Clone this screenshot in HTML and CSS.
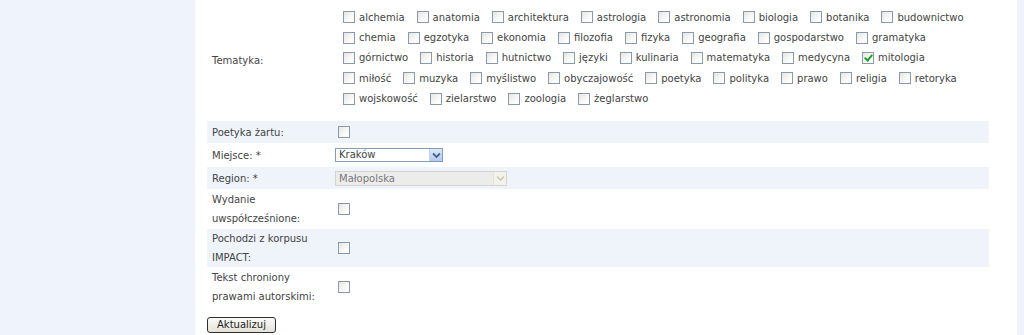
FILE: index.html
```html
<!DOCTYPE html>
<html lang="pl">

<head>
    <meta charset="UTF-8">
    <title>Edycja tekstu</title>
    <link rel="stylesheet" href="styles.css">
</head>

<body>
    <div class="page">
        <div class="sidebar"></div>
        <div class="content">
            <form class="edit-form">
                <table class="fields">
                    <tr class="row-topics">
                        <td class="label">Tematyka:</td>
                        <td class="value">
                            <div class="topics">
                                <label class="topic"><input type="checkbox">alchemia</label>
                                <label class="topic"><input type="checkbox">anatomia</label>
                                <label class="topic"><input type="checkbox">architektura</label>
                                <label class="topic"><input type="checkbox">astrologia</label>
                                <label class="topic"><input type="checkbox">astronomia</label>
                                <label class="topic"><input type="checkbox">biologia</label>
                                <label class="topic"><input type="checkbox">botanika</label>
                                <label class="topic"><input type="checkbox">budownictwo</label>
                                <label class="topic"><input type="checkbox">chemia</label>
                                <label class="topic"><input type="checkbox">egzotyka</label>
                                <label class="topic"><input type="checkbox">ekonomia</label>
                                <label class="topic"><input type="checkbox">filozofia</label>
                                <label class="topic"><input type="checkbox">fizyka</label>
                                <label class="topic"><input type="checkbox">geografia</label>
                                <label class="topic"><input type="checkbox">gospodarstwo</label>
                                <label class="topic"><input type="checkbox">gramatyka</label>
                                <label class="topic"><input type="checkbox">górnictwo</label>
                                <label class="topic"><input type="checkbox">historia</label>
                                <label class="topic"><input type="checkbox">hutnictwo</label>
                                <label class="topic"><input type="checkbox">języki</label>
                                <label class="topic"><input type="checkbox">kulinaria</label>
                                <label class="topic"><input type="checkbox">matematyka</label>
                                <label class="topic"><input type="checkbox">medycyna</label>
                                <label class="topic"><input type="checkbox" checked>mitologia</label>
                                <label class="topic"><input type="checkbox">miłość</label>
                                <label class="topic"><input type="checkbox">muzyka</label>
                                <label class="topic"><input type="checkbox">myślistwo</label>
                                <label class="topic"><input type="checkbox">obyczajowość</label>
                                <label class="topic"><input type="checkbox">poetyka</label>
                                <label class="topic"><input type="checkbox">polityka</label>
                                <label class="topic"><input type="checkbox">prawo</label>
                                <label class="topic"><input type="checkbox">religia</label>
                                <label class="topic"><input type="checkbox">retoryka</label>
                                <label class="topic"><input type="checkbox">wojskowość</label>
                                <label class="topic"><input type="checkbox">zielarstwo</label>
                                <label class="topic"><input type="checkbox">zoologia</label>
                                <label class="topic"><input type="checkbox">żeglarstwo</label>
                            </div>
                        </td>
                    </tr>
                    <tr class="odd row-short">
                        <td class="label">Poetyka żartu:</td>
                        <td class="value"><input type="checkbox" class="single"></td>
                    </tr>
                    <tr class="row-short">
                        <td class="label">Miejsce: *</td>
                        <td class="value">
                            <span class="select-box place">
                                <select>
                                    <option>Kraków</option>
                                </select>
                                <span class="select-arrow"><svg width="9" height="7" viewBox="0 0 9 7"><path d="M1 1.5 L4.5 5 L8 1.5" fill="none" stroke="#4d6185" stroke-width="1.8"/></svg></span>
                            </span>
                        </td>
                    </tr>
                    <tr class="odd row-short">
                        <td class="label">Region: *</td>
                        <td class="value">
                            <span class="select-box region disabled">
                                <select disabled>
                                    <option>Małopolska</option>
                                </select>
                                <span class="select-arrow"><svg width="9" height="7" viewBox="0 0 9 7"><path d="M1 1.5 L4.5 5 L8 1.5" fill="none" stroke="#c9c7ba" stroke-width="1.5"/></svg></span>
                            </span>
                        </td>
                    </tr>
                    <tr class="row-tall">
                        <td class="label">Wydanie<br>uwspółcześnione:</td>
                        <td class="value"><input type="checkbox" class="single"></td>
                    </tr>
                    <tr class="odd row-tall">
                        <td class="label">Pochodzi z korpusu<br>IMPACT:</td>
                        <td class="value"><input type="checkbox" class="single"></td>
                    </tr>
                    <tr class="row-tall">
                        <td class="label">Tekst chroniony<br>prawami autorskimi:</td>
                        <td class="value"><input type="checkbox" class="single"></td>
                    </tr>
                </table>
                <button type="button" class="submit">Aktualizuj</button>
            </form>
        </div>
        <div class="edge"></div>
    </div>
</body>

</html>
```

FILE: styles.css
```css
body {
    margin: 0;
    padding: 0;
    font-family: "DejaVu Sans", Verdana, sans-serif;
    font-size: 10px;
    color: #444;
    background-color: #fff;
}

.page {
    display: flex;
    min-height: 335px;
}

.sidebar {
    width: 195px;
    background-color: #eef3fc;
}

.content {
    flex: 1;
    padding: 0 28px 0 12px;
}

.edge {
    width: 7px;
    background-color: #eef3fc;
}

.fields {
    width: 782px;
    margin-top: -1px;
    border-collapse: separate;
    border-spacing: 0 1px;
}

.fields td {
    padding: 0;
}

.fields .label {
    width: 123px;
    padding-left: 5px;
    line-height: 19px;
    vertical-align: middle;
}

.fields .odd td {
    background-color: #eff3fa;
}

.row-topics td {
    height: 120px;
}

.row-short td {
    height: 22px;
}

.row-tall td {
    height: 38px;
}

.topics {
    display: flex;
    flex-wrap: wrap;
    width: 645px;
    padding: 7px 0 11px 8px;
}

.topic {
    display: inline-flex;
    align-items: center;
    height: 20.3px;
    margin-right: 12px;
    white-space: nowrap;
}

input[type="checkbox"] {
    appearance: none;
    -webkit-appearance: none;
    width: 12px;
    height: 12px;
    margin: 0 4px 0 0;
    border: 1px solid #8a9aae;
    background: linear-gradient(135deg, #e6e6e0 0%, #ffffff 80%);
    position: relative;
    vertical-align: middle;
}

input[type="checkbox"]:checked::after {
    content: "";
    position: absolute;
    left: 3px;
    top: 0px;
    width: 3px;
    height: 6px;
    border: solid #21a121;
    border-width: 0 2px 2px 0;
    transform: rotate(40deg);
}

.single {
    margin-left: 3px !important;
}

.select-box {
    display: inline-block;
    position: relative;
    vertical-align: middle;
}

.select-box select {
    appearance: none;
    -webkit-appearance: none;
    display: block;
    height: 14px;
    padding: 0 0 0 3px;
    border: 1px solid #7f9db9;
    border-radius: 0;
    font-family: "DejaVu Sans", Verdana, sans-serif;
    font-size: 10px;
    line-height: 12px;
    color: #444;
    background-color: #fff;
    outline: none;
}

.select-box.place select {
    width: 108px;
}

.select-box.region select {
    width: 172px;
    height: 15px;
    line-height: 13px;
    color: #444;
    background-color: #ecebe4;
    border-color: #c9c7ba;
}

.select-arrow {
    position: absolute;
    top: 1px;
    right: 1px;
    bottom: 1px;
    width: 12px;
    display: flex;
    align-items: center;
    justify-content: center;
    background: linear-gradient(#dce7fb, #b3c9f1);
    border-left: 1px solid #c2d3f2;
}

.disabled .select-arrow {
    background: #f3f2ec;
    border-left: 1px solid #e3e1d8;
}

.submit {
    display: block;
    margin-top: 10px;
    width: 69px;
    height: 16px;
    padding: 0;
    border: 1px solid #2e2e2e;
    border-radius: 3px;
    background: linear-gradient(#fbfbf8, #e4e2d8);
    font-family: "DejaVu Sans", Verdana, sans-serif;
    font-size: 10px;
    line-height: 14px;
    color: #222;
}
```
